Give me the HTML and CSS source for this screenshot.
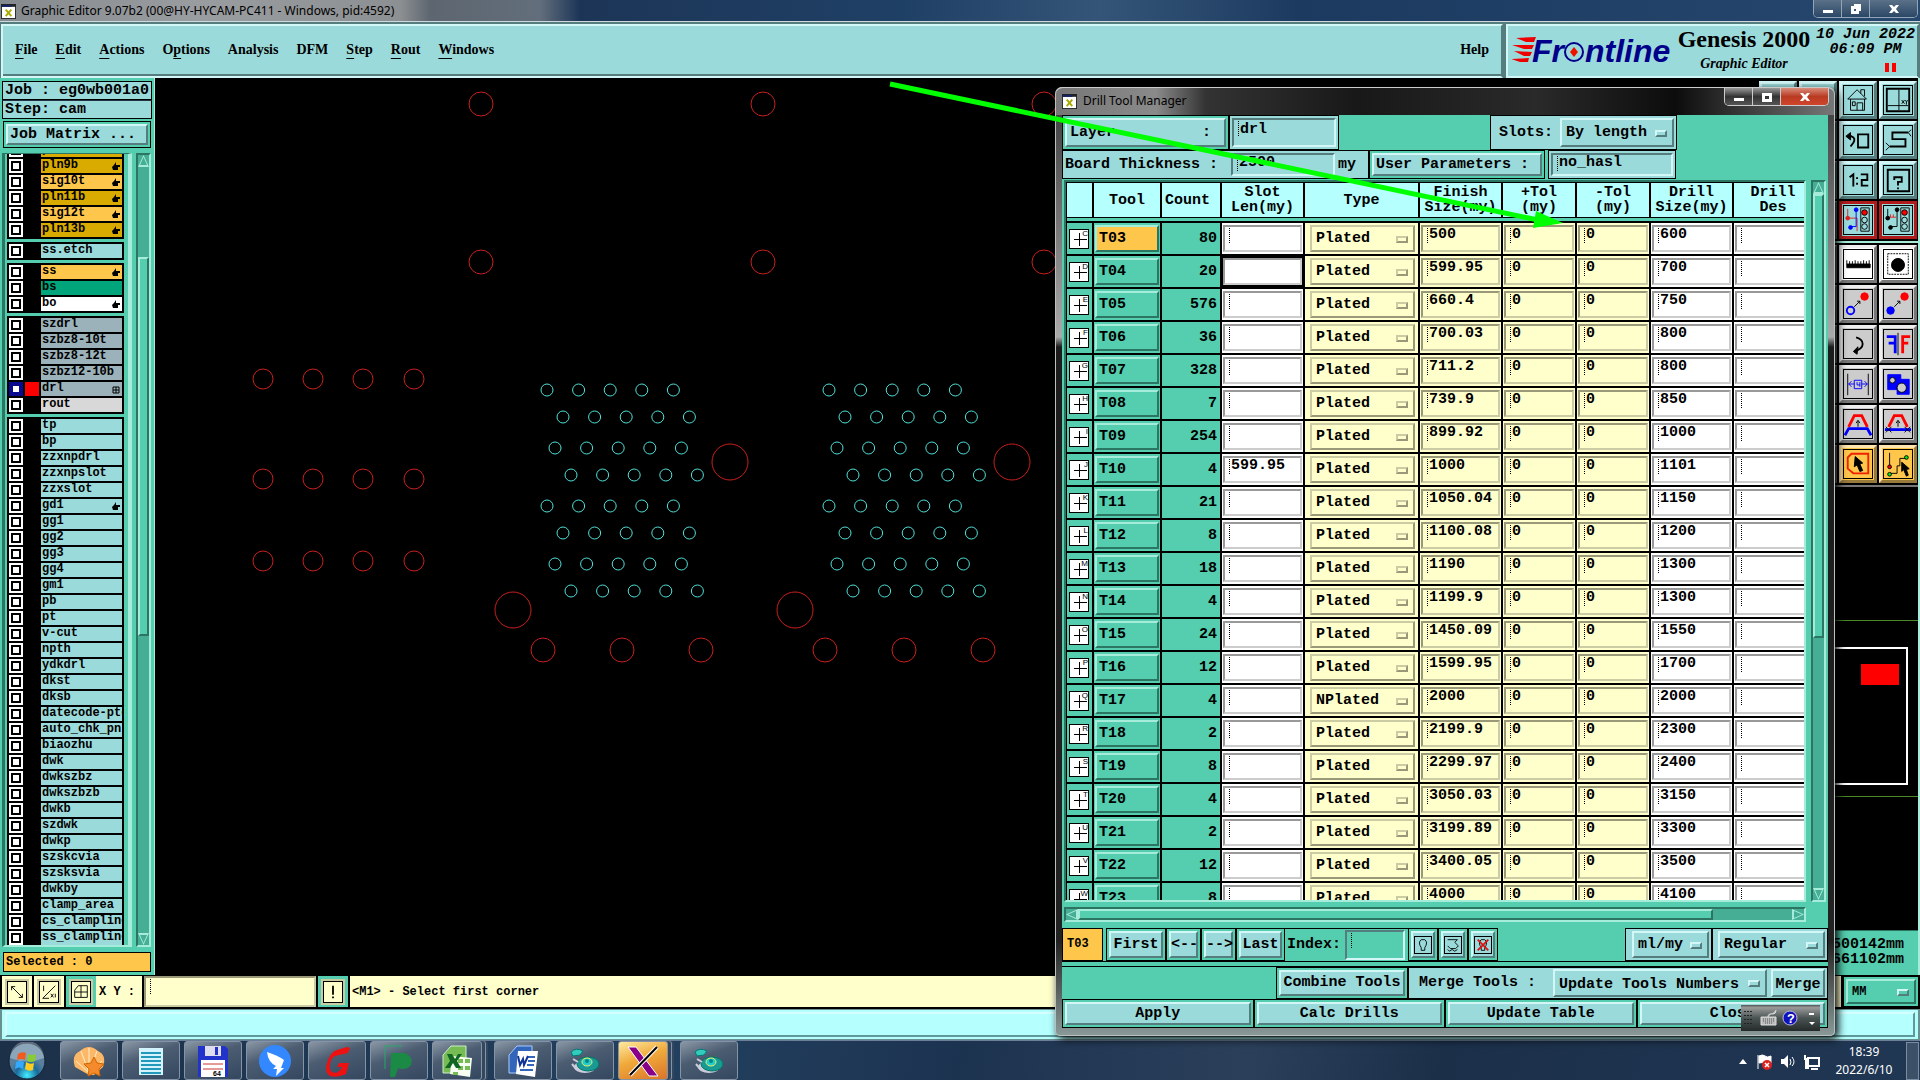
FILE: index.html
```html
<!DOCTYPE html>
<html lang="en">
<head>
<meta charset="UTF-8"/>
<meta name="viewport" content="width=device-width,initial-scale=1.0"/>
<title>Graphic Editor 9.07b2</title>
<link rel="stylesheet" href="styles.css">
</head>

<body>
<!-- ─── TITLE BAR ─────────────────────────────────────────────────────── -->
<div class="titlebar">
  <svg class="xicon" viewBox="0 0 16 16"><path d="M0 0h16v16H0z" fill="#222"/><path d="M1 3h14v12H1z" fill="#fff"/><path d="M1 1h10v2H1z" fill="#126"/><path d="M5 6l6 7M11 6l-6 7" stroke="#aa0" stroke-width="2"/></svg>
  <span class="title">Graphic Editor 9.07b2 (00@HY-HYCAM-PC411 - Windows, pid:4592)</span>
  <div class="winbtns">
    <button aria-label="Minimize"><svg viewBox="0 0 12 12"><path d="M1 7h10v3H1z"/></svg></button>
    <button aria-label="Restore"><svg viewBox="0 0 12 12"><path d="M4 1h7v7H9V3H4z"/><path d="M1 3h8v8H1zM4 6v2h2V6z" fill-rule="evenodd"/></svg></button>
    <button class="wide" aria-label="Close"><svg viewBox="0 0 12 12"><path d="M1 2h3l2 2 2-2h3L8 6l3 4H8L6 8l-2 2H1l3-4z"/></svg></button>
  </div>
</div>

<!-- ─── MENU + BRAND ──────────────────────────────────────────────────── -->
<header>
  <nav>
    <button><u>F</u>ile</button><button><u>E</u>dit</button><button><u>A</u>ctions</button><button>O<u>p</u>tions</button><button>Analysis</button><button>DFM</button><button><u>S</u>tep</button><button><u>R</u>out</button><button><u>W</u>indows</button>
    <button class="help">Help</button>
  </nav>
  <div class="brand">
    <svg class="logo" viewBox="0 0 162 42">
      <path d="M4 8l20-1-2 5h-8zM0 15l22 0-2 4h-8zM2 21l18 1-2 4h-6zM-1 29l18-1-1 4h-8z" fill="#e00"/>
      <text x="20" y="32">Fr</text><text x="73" y="32">ntline</text>
      <circle cx="62" cy="22" r="9" fill="none" stroke="#00008b" stroke-width="2"/>
      <path d="M62 17l4 5-4 5-4-5z" fill="#e10"/>
    </svg>
    <div class="product"><strong>Genesis 2000</strong><em>Graphic Editor</em></div>
    <div class="clock">10 Jun 2022<br>06:09 PM<div class="pause"><i></i><i></i></div></div>
  </div>
</header>

<!-- ─── WORKSPACE ─────────────────────────────────────────────────────── -->
<main>
  <aside class="layers">
    <div class="info">Job : eg0wb001a0</div>
    <div class="info">Step: cam</div>
    <div class="frame matrix"><button class="btn">Job Matrix ...</button></div>
    <div class="listwrap">
      <div class="listbox"><div id="list"></div></div>
      <div class="vbar"><i class="up"></i><b class="layerthumb"></b><i class="down"></i></div>
    </div>
    <div class="selected">Selected : 0</div>
  </aside>

  <svg id="canvas"></svg>

  <aside class="right">
    <div class="tools">
      <button></button><button></button>
      <button aria-label="Home"><svg viewBox="0 0 30 30"><path d="M4 14L14 4l10 10zM7 14v12h15V14M14 26v-8h6v8M9 17h3v4H9zM18 8V4h4v7"/></svg></button>
      <button aria-label="Area XY"><svg viewBox="0 0 30 30"><path d="M3 3h24v24H3z" stroke-width="2"/><path d="M16 4v22M4 21h22M19 15l3 4m0-4l-3 4M23 15l1 2 2-2m-2 2v3"/></svg></button>
      <button></button><button></button>
      <button aria-label="Previous"><svg viewBox="0 0 30 30"><path d="M15 9h11v14H15zM5 11h3q5 2 2 7l-3 4" stroke-width="2"/><path d="M2 11l5-4v8z" fill="#000"/></svg></button>
      <button aria-label="Path"><svg viewBox="0 0 30 30"><path d="M26 7H9v7h14v8H6" stroke-width="2"/><path d="M29 4l-3 3 3 4M2 18l4 4-4 4"/></svg></button>
      <button></button><button></button>
      <button aria-label="Zoom 1:2"><svg viewBox="0 0 30 30"><path d="M6 12l4-3v13M14 12v2M14 18v2M18 9h7v6h-6v6h7" stroke-width="2"/></svg></button>
      <button aria-label="Query"><svg viewBox="0 0 30 30"><path d="M4 4h23v23H4zM11 15v-3h8v5h-4v4M15 23v2" stroke-width="2"/></svg></button>
      <button></button><button></button>
      <button class="alert" aria-label="Net check"><svg viewBox="0 0 30 30"><path d="M4 3v10h10v14" stroke="#d22"/><path d="M13 4v18H7" stroke="#00f"/><circle cx="4" cy="13" r="2" fill="#d22" stroke="#d22"/><circle cx="13" cy="4" r="2" fill="#00f" stroke="#00f"/><circle cx="7" cy="23" r="2" fill="#00f" stroke="#00f"/><path d="M18 2h9v25h-9z"/><circle cx="22" cy="7" r="3" fill="red"/><circle cx="22" cy="15" r="3"/><circle cx="22" cy="22" r="3"/></svg></button>
      <button class="alert" aria-label="Short check"><svg viewBox="0 0 30 30"><path d="M4 3v10M14 4v18H8"/><path d="M5 12h8m-6-3v3m3-3v3" stroke="#d22"/><circle cx="4" cy="13" r="2" fill="#000"/><circle cx="14" cy="4" r="2" fill="#000"/><circle cx="7" cy="23" r="2" fill="#000"/><path d="M18 2h9v25h-9z"/><circle cx="22" cy="7" r="3" fill="red"/><circle cx="22" cy="15" r="3"/><circle cx="22" cy="22" r="3"/></svg></button>
    </div>
    <div class="tools gray">
      <button></button><button></button>
      <button class="white" aria-label="Measure"><svg viewBox="0 0 30 30"><path d="M3 15h25v4H3z" fill="#000"/><path d="M3 11v4m3-3v3m3-3v3m3-4v4m3-3v3m3-3v3m3-4v4m3-3v3m3-4v4"/></svg></button>
      <button class="white" aria-label="Pad"><svg viewBox="0 0 30 30"><path d="M4 4h22v22H4z" stroke-dasharray="2 1"/><circle cx="15" cy="16" r="7" fill="#000"/></svg></button>
      <button></button><button></button>
      <button aria-label="Move"><svg viewBox="0 0 30 30"><circle cx="22" cy="7" r="4" fill="red" stroke="red"/><circle cx="7" cy="22" r="4" stroke="#00f" stroke-width="2"/><path d="M11 18l6-6m-3 0h3v3"/></svg></button>
      <button aria-label="Copy"><svg viewBox="0 0 30 30"><circle cx="22" cy="7" r="4" fill="red" stroke="red"/><circle cx="7" cy="22" r="4" fill="#00f" stroke="#00f"/><path d="M11 18l6-6m-3 0h3v3"/></svg></button>
      <button></button><button></button>
      <button aria-label="Rotate"><svg viewBox="0 0 30 30"><path d="M13 8q7 2 7 7t-9 8" stroke-width="2"/><path d="M15 18l-5 5 4 3z" fill="#000"/></svg></button>
      <button aria-label="Mirror"><svg viewBox="0 0 30 30"><path d="M15 3v24"/><path d="M3 7h9v18M5 14h7" stroke="#00f" stroke-width="3"/><path d="M28 7h-8v18M20 14h6" stroke="red" stroke-width="3"/></svg></button>
      <button></button><button></button>
      <button aria-label="Stretch"><svg viewBox="0 0 30 30"><path d="M4 4v23M26 4v23"/><path d="M5 15h6m8 0h6M8 12l-3 3 3 3M22 12l3 3-3 3M11 11h8v9h-8zM14 13v3h3m0-3v5" stroke="#00f"/></svg></button>
      <button aria-label="Surface"><svg viewBox="0 0 30 30"><path d="M4 5h14v5h9v16H14v-5H4z" fill="#00f" stroke="#00f"/><circle cx="9" cy="11" r="3" fill="#ccc"/><circle cx="19" cy="19" r="5" fill="#ccc"/></svg></button>
      <button></button><button></button>
      <button aria-label="Reshape"><svg viewBox="0 0 30 30"><path d="M5 18L11 6h8l6 12" stroke="red" stroke-width="3"/><path d="M1 27l4-7h20l4 7" stroke="#00f" stroke-width="3"/><path d="M15 18v-6m-2 2l2-3 2 3"/></svg></button>
      <button aria-label="Slide"><svg viewBox="0 0 30 30"><path d="M5 18L11 6h8l6 12" stroke="red" stroke-width="3"/><path d="M1 21h28" stroke="#00f" stroke-width="3"/><path d="M15 18v-6m-2 2l2-3 2 3M2 18l6 6m0-6l-6 6M22 18l6 6m0-6l-6 6"/></svg></button>
      <button></button><button></button>
      <button class="orange" aria-label="Polygon select"><svg viewBox="0 0 30 30"><path d="M8 4h18v21H10l-6-5V8z" stroke="#e20" stroke-width="2"/><path d="M12 7l8 7-3 1 3 7-3 1-3-7-3 2z" fill="#000"/></svg></button>
      <button class="orange" aria-label="Net select"><svg viewBox="0 0 30 30"><path d="M6 3v15M6 25h8V17h3V9h6"/><circle cx="6" cy="18" r="2" fill="red"/><circle cx="6" cy="26" r="2" fill="#0e0"/><circle cx="24" cy="8" r="2" fill="#0e0"/><path d="M19 13l8 7-3 1 2 6-2 1-3-7-2 2z" fill="#000"/></svg></button>
    </div>
    <div class="overview"><div class="board"><i></i></div></div>
    <div class="coords">500142mm<br>661102mm</div>
  </aside>
</main>

<!-- ─── STATUS LINE ───────────────────────────────────────────────────── -->
<div class="status">
  <button aria-label="Diagonal"><svg viewBox="0 0 20 20"><path d="M4 4l12 12M4 8V4h4M16 12v4h-4"/></svg></button>
  <button aria-label="Angle"><svg viewBox="0 0 20 20"><path d="M3 17L17 3M3 17h7M4 3v6M12 12l3 4m0-4l-3 4m5-4v4"/></svg></button>
  <button class="on" aria-label="Grid"><svg viewBox="0 0 20 20"><path d="M7 3h10v13H3V8zM10 3v13M3 10h14"/></svg></button>
  <label for="xy">X Y :</label>
  <input id="xy" class="field" type="text">
  <button class="on" aria-label="Note"><svg viewBox="0 0 20 20"><path d="M10 3v10M10 15v2" stroke-width="2"/></svg></button>
  <span class="hint">&lt;M1&gt; - Select first corner</span>
  <div class="frame units"><span class="opt"><select aria-label="Units"><option>MM</option></select></span></div>
</div>
<div class="message"><div></div></div>

<!-- ─── TASKBAR ───────────────────────────────────────────────────────── -->
<footer>
  <button class="orb" aria-label="Start"><svg viewBox="0 0 38 38"><defs><radialGradient id="g" cy=".9"><stop offset="0" stop-color="#4ef"/><stop offset=".6" stop-color="#1a6a9c"/><stop offset="1" stop-color="#5a7f9c"/></radialGradient></defs><circle cx="19" cy="19" r="18" fill="url(#g)" stroke="#123"/><path d="M2 16a17 17 0 0 1 34 0q-17 7-34 0z" fill="#fff" opacity=".3"/><path d="M10 12q4-3 8-1l-1 7q-4-2-8 0z" fill="#f25a1e"/><path d="M20 12q4 2 8 0l-1 7q-4 2-8 0z" fill="#8c3"/><path d="M8 20q4-2 8 0l-1 7q-4-3-8 0z" fill="#3af"/><path d="M18 20q4 3 8 1l-1 7q-4 2-8-1z" fill="#fc2"/></svg></button>
  <button class="task" aria-label="Shell"><svg viewBox="0 0 36 36"><path d="M18 32L4 24Q0 12 9 8q9-8 18 0 9 4 5 16l-9 8z" fill="#fdb768"/><path d="M18 30L5 18m13 12L10 8m8 22V5m0 25l8-22m-8 22l13-12" stroke="#fff0c8" fill="none"/><path d="M23 14l3 6 7 1-5 5 1 7-6-3-6 3 1-7-5-5 7-1z" fill="#f58a2c" stroke="#c60"/></svg></button>
  <button class="task" aria-label="Notes"><svg viewBox="0 0 36 36"><path d="M6 5h24v27H6z" fill="#d5f3fc"/><path d="M8 10h20M8 14h20M8 18h20M8 22h20M8 26h20M8 30h20" stroke="#29b" stroke-width="2"/></svg></button>
  <button class="task" aria-label="Floppy"><svg viewBox="0 0 36 36"><path d="M3 3h27l3 3v28H3z" fill="#23c"/><path d="M10 3h16v10H10z" fill="#dde"/><path d="M20 4h3v8h-3z" fill="#23c"/><path d="M6 17h24v17H6z" fill="#fff"/><path d="M8 21h20M8 26h20" stroke="#c33"/><text x="18" y="33" font-size="7">64</text></svg></button>
  <button class="task" aria-label="Bird"><svg viewBox="0 0 36 36"><circle cx="18" cy="18" r="16" fill="#38f"/><path d="M10 9q10 3 17 8l-3 8h3l-8 8 1-7h-4l3-3q-8-4-9-14z" fill="#fff"/></svg></button>
  <button class="task" aria-label="G"><svg viewBox="0 0 36 36"><path d="M28 4l3 1-2 5-13 3q-4 2-5 8t2 8q6 3 10-5h-5l2-4h10l-3 11q-9 4-16 2-6-4-3-13 3-11 10-13z" fill="#e11"/></svg></button>
  <button class="task" aria-label="P"><svg viewBox="0 0 36 36"><path d="M4 26V3h17" fill="none" stroke="#2a6"/><path d="M10 10h14q9 4 6 12-5 6-13 3l-3 9H9z" fill="#1a8a45"/></svg></button>
  <button class="task stack" aria-label="Spreadsheet"><svg viewBox="0 0 36 36"><path d="M4 30V12l8-9h15v27z" fill="#7b5" stroke="#cec"/><path d="M13 13l20 2-2 19-20-3z" fill="#f6fff2"/><path d="M19 16h5v4h-5zm7 0h5v4h-5zm-7 7h5v4h-5zm7 0h5v4h-5zm-12 6h5v3h-5z" fill="#7b5"/><path d="M8 11h5l3 5 3-5h4l-5 7 4 7h-5l-3-5-3 5H6l5-7z" fill="#162"/></svg></button>
  <button class="task" aria-label="Document"><svg viewBox="0 0 36 36"><path d="M4 30V12l8-9h15v27z" fill="#36b" stroke="#acf"/><path d="M13 8h20l-3 26-19-3z" fill="#fff"/><path d="M23 14h7M23 18h7M22 22h7M15 27h13" stroke="#36b" stroke-width="2"/><path d="M13 13l2 9 3-6 1 6 4-9" fill="none" stroke="#139" stroke-width="2"/></svg></button>
  <button class="task" aria-label="Disc"><svg viewBox="0 0 36 36"><ellipse cx="18" cy="24" rx="11" ry="6" fill="#ccd"/><ellipse cx="21" cy="21" rx="11" ry="7" fill="#1a9a94" stroke="#076"/><ellipse cx="20" cy="19" rx="5" ry="4" fill="#2cc" stroke="#ee6"/><circle cx="20" cy="18" r="2" fill="#088"/><path d="M4 9q5-5 12-1l-3 4-7 1z" fill="#3cb" stroke="#077"/><path d="M6 16l5 3M5 21l5 6" stroke="#ccd" stroke-width="2"/></svg></button>
  <button class="task active stack" aria-label="X server"><svg viewBox="0 0 36 36"><path d="M3 4h8l22 29h-9z" fill="#808" stroke="#fff"/><path d="M32 4L5 32" stroke="#fff" stroke-width="4"/><path d="M32 4L5 32" stroke="#000" stroke-width="2"/></svg></button>
  <button class="task" aria-label="Disc 2"><svg viewBox="0 0 36 36"><ellipse cx="18" cy="24" rx="11" ry="6" fill="#ccd"/><ellipse cx="21" cy="21" rx="11" ry="7" fill="#1a9a94" stroke="#076"/><ellipse cx="20" cy="19" rx="5" ry="4" fill="#2cc" stroke="#ee6"/><circle cx="20" cy="18" r="2" fill="#088"/><path d="M4 9q5-5 12-1l-3 4-7 1z" fill="#3cb" stroke="#077"/><path d="M6 16l5 3M5 21l5 6" stroke="#ccd" stroke-width="2"/></svg></button>
  <div class="tray">
    <svg viewBox="0 0 84 18"><path d="M1 12l4-5 4 5z" fill="#fff"/><path d="M20 3v14M21 4q4-2 6 0t6 0v7q-4 1-6 0t-6 0z" fill="#fff" stroke="#fff"/><circle cx="29" cy="13" r="5" fill="#d22"/><path d="M27 11l4 4m0-4l-4 4" stroke="#fff" stroke-width="1.5"/><path d="M43 7h3l4-4v13l-4-4h-3z" fill="#fff"/><path d="M52 7q2 3 0 6M54 5q4 5 0 9" fill="none" stroke="#fff"/><path d="M70 6h11v8H70zM73 17h7M67 3v4h4M68 8v8h3" fill="none" stroke="#fff" stroke-width="2"/></svg>
    <div class="time">18:39<br>2022/6/10</div>
    <button class="peek" aria-label="Show desktop"></button>
  </div>
</footer>

<!-- ─── DRILL TOOL MANAGER ────────────────────────────────────────────── -->
<section class="dialog">
  <div class="dtitle">
    <svg class="xicon" viewBox="0 0 16 16"><path d="M0 0h16v16H0z" fill="#222"/><path d="M1 3h14v12H1z" fill="#fff"/><path d="M1 1h10v2H1z" fill="#126"/><path d="M5 6l6 7M11 6l-6 7" stroke="#aa0" stroke-width="2"/></svg>
    <span>Drill Tool Manager</span>
    <div class="winbtns">
      <button aria-label="Minimize"><svg viewBox="0 0 12 12"><path d="M1 7h10v3H1z"/></svg></button>
      <button aria-label="Maximize"><svg viewBox="0 0 12 12"><path d="M1 2h10v9H1zM4 5v3h4V5z" fill-rule="evenodd"/></svg></button>
      <button class="wide red" aria-label="Close"><svg viewBox="0 0 12 12"><path d="M1 2h3l2 2 2-2h3L8 6l3 4H8L6 8l-2 2H1l3-4z"/></svg></button>
    </div>
  </div>
  <div class="client">
    <div class="row row1">
      <div class="frame w-layer"><button class="btn split"><span>Layer</span><span>:</span></button></div>
      <div class="frame aqua w-drl"><input class="field" type="text" value="drl" aria-label="Layer"></div>
      <div class="frame aqua slots"><label for="slots">Slots:</label><span class="opt"><select id="slots"><option>By length</option></select></span></div>
    </div>
    <div class="row row2">
      <div class="frame aqua board-t"><label for="thick">Board Thickness :</label><input id="thick" class="field" type="text" value="2500"><span>my</span></div>
      <div class="frame w-user"><button class="btn">User Parameters :</button></div>
      <div class="frame aqua w-hasl"><input class="field" type="text" value="no_hasl" aria-label="User parameters"></div>
    </div>
    <div class="scroller">
      <div class="tablebox">
        <table>
          <colgroup><col class="c1"><col class="c2"><col class="c3"><col class="c4"><col class="c5"><col class="c4"><col class="c6"><col class="c6"><col class="c4"><col class="c7"></colgroup>
          <thead><tr><th></th><th>Tool</th><th class="cnt">Count</th><th>Slot<br>Len(my)</th><th>Type</th><th>Finish<br>Size(my)</th><th>+Tol<br>(my)</th><th>-Tol<br>(my)</th><th>Drill<br>Size(my)</th><th>Drill<br>Des</th></tr></thead>
          <tbody id="tools"></tbody>
        </table>
      </div>
      <div class="vbar"><i class="up"></i><b class="tablethumb"></b><i class="down"></i></div>
      <div class="hbar"><i class="left"></i><b></b><i class="rightarrow"></i></div>
    </div>
    <div class="row row3">
      <div class="current">T03</div>
      <div class="frame w-first"><button class="btn">First</button></div>
      <div class="frame w-prev"><button class="btn">&lt;--</button></div>
      <div class="frame w-prev"><button class="btn">--&gt;</button></div>
      <div class="frame w-last"><button class="btn">Last</button></div>
      <div class="index"><label for="idx">Index:</label><input id="idx" class="field" type="text"></div>
      <div class="frame w-ico"><button class="btn" aria-label="Highlight"><svg viewBox="0 0 18 18"><path d="M7 12Q3 6 7 3h4q4 3 0 9v3H7z"/></svg></button></div>
      <div class="frame w-ico"><button class="btn" aria-label="Feature"><svg viewBox="0 0 18 18"><path d="M3 3h11l-3 3 4 4-3 3H6l-3-3M3 14l2 2 3-2 3 2 3-2"/></svg></button></div>
      <div class="frame w-ico"><button class="btn" aria-label="Clear"><svg viewBox="0 0 18 18"><path d="M7 12Q3 6 7 3h4q4 3 0 9v3H7z"/><path d="M3 3l12 12M15 3L3 15" stroke="#d11" stroke-width="2"/></svg></button></div>
      <div class="frame aqua w-unit"><span class="opt"><select aria-label="Length unit"><option>ml/my</option></select></span></div>
      <div class="frame aqua w-reg"><span class="opt"><select aria-label="Mode"><option>Regular</option></select></span></div>
    </div>
    <div class="row row4">
      <div class="frame w-comb"><button class="btn">Combine Tools</button></div>
      <div class="frame aqua merge"><label for="merge">Merge Tools :</label><span class="opt"><select id="merge"><option>Update Tools Numbers</option></select></span><span class="ring"><button class="btn">Merge</button></span></div>
    </div>
    <div class="row row5">
      <div class="frame"><button class="btn">Apply</button></div>
      <div class="frame"><button class="btn">Calc Drills</button></div>
      <div class="frame"><button class="btn">Update Table</button></div>
      <div class="frame"><button class="btn">Close</button></div>
    </div>
  </div>
</section>

<div class="langbar">
  <svg viewBox="0 0 79 26"><path d="M4 6v16M7 6v16M10 6v16" stroke="#222" stroke-dasharray="1 3" stroke-width="2"/><path d="M20 12h15v8H20zM27 12q0-4 5-3 3 0 3-4" fill="#bbb" stroke="#ddd"/><path d="M22 14h11M22 16h11M24 18h7" stroke="#555" stroke-dasharray="1 1"/><circle cx="49" cy="13" r="7" fill="#11b" stroke="#bbd"/><text x="46" y="18" font-size="13" fill="#fff">?</text><path d="M68 9h5" stroke="#fff" stroke-width="2"/><path d="M68 17h6l-3 3z" fill="#fff"/></svg>
</div>

<svg class="arrow" viewBox="0 0 680 150"><path d="M2 3L650 139" stroke="#0f0" stroke-width="5"/><path d="M648 130l27 12-30 5z" fill="#0f0"/></svg>

<script src="app.js"></script>
</body>
</html>
```
FILE: styles.css
```css
:root{
  --teal:#54ceae;--teal-l:#a6ecda;--teal-d:#2c7563;--trough:#45ae94;
  --aqua:#9bdada;--aqua-l:#d3f6f6;--aqua-d:#557d7d;
  --ice:#b5ffff;--cream:#ffffcc;--orange:#ffc64c;
  --mono:"Liberation Mono",monospace;--serif:"Liberation Serif",serif;--ui:"Noto Sans","Open Sans",sans-serif;
}
*,*::before,*::after{box-sizing:border-box;margin:0;padding:0}
html,body{height:100%}
body{display:flex;flex-direction:column;background:#000;color:#000;font:bold 15px/18px var(--mono);overflow:hidden;position:relative}
button,input,select{font:inherit;color:inherit;border:0;border-radius:0;background:none;appearance:none;outline:0}
select{padding:0}
svg{display:block}

/* ─── TITLE BAR ─────────────────────────────────────────────────────────── */
.titlebar{height:22px;display:flex;align-items:flex-start;padding-left:1px;border-bottom:1px solid #cfd8de;position:relative;
  background:linear-gradient(90deg,#858a8e 0,#9a9da0 200px,#8d9092 400px,#5d6670 430px,#626e7b 540px,#1c3557 580px,#1f4065 900px,#345577 1100px,#1c3a60 1300px,#26476e 100%)}
.xicon{width:15px;height:15px;margin:4px 5px 0 0}
.title{font:12px/22px var(--ui)}
.winbtns{margin-left:auto;margin-right:2px;display:flex;height:18px;border:1px solid #93a6b8;border-top:0;border-radius:0 0 5px 5px;overflow:hidden}
.winbtns button{width:28px;display:grid;place-items:center;background:linear-gradient(#5b7188,#2b4766);border-right:1px solid #93a6b8}
.winbtns .wide{width:47px;border-right:0}
.winbtns .red{background:linear-gradient(#d98c7c,#b93b22 50%,#c8402a)}
.winbtns svg{width:12px;height:12px;fill:#fff}

/* ─── MENU + BRAND ──────────────────────────────────────────────────────── */
header{height:56px;display:flex;gap:3px;padding:2px 1px 0;background:var(--aqua-d)}
nav,.brand{background:var(--aqua);border:2px solid var(--aqua-l);border-right-color:var(--aqua-d)}
nav{flex:1;display:flex;align-items:center;gap:18px;padding:0 12px 2px;box-shadow:inset 0 -2px var(--aqua-d);font:bold 14px/20px var(--serif)}
nav u{text-underline-offset:4px}
.help{margin-left:auto}
.brand{width:413px;display:flex;padding-left:4px}
.logo{width:162px;height:42px;margin-top:4px}
.logo text{font:italic bold 32px "Liberation Sans",sans-serif;fill:#00008b}
.product{width:140px;text-align:center;font-family:var(--serif)}
.product strong{display:block;font-size:24px;line-height:26px}
.product em{display:block;font-size:14px;line-height:24px}
.clock{flex:1;padding-top:1px;text-align:center;font-style:italic;line-height:15px;white-space:nowrap}
.pause{display:flex;gap:3px;justify-content:center;margin:6px 0 0 50px}
.pause i{width:4px;height:9px;background:red}

/* ─── LAYER PANEL ───────────────────────────────────────────────────────── */
main{flex:1;min-height:0;display:flex}
.layers{width:155px;display:flex;flex-direction:column;padding:3px 2px;background:var(--teal);border-right:1px solid var(--teal-l)}
.info{height:19px;padding-left:2px;background:var(--aqua);border:1px solid #000;white-space:nowrap}
.info+.info{border-top-color:#234}
.frame{border:1px solid #000;padding:2px;display:flex;background:var(--teal)}
.frame.aqua{background:var(--aqua)}
.btn{flex:1;min-width:0;background:var(--aqua);border:2px solid var(--aqua-l);border-right-color:var(--aqua-d);border-bottom-color:var(--aqua-d);white-space:nowrap}
.matrix{margin:2px 1px 5px;height:27px}
.matrix .btn{text-align:left;padding-left:2px}
.listwrap{flex:1;min-height:0;display:flex;gap:4px;padding-right:1px}
.listbox{flex:1;min-width:0;overflow:hidden;border:solid;border-width:1px 4px 2px 3px;border-color:var(--teal-d) var(--teal-l) var(--teal-l) var(--teal-d)}
#list{margin:-13px 4px 0 2px}
.group{background:#000;padding:2px;display:grid;grid-template-columns:minmax(0,1fr);gap:2px;margin-bottom:3px}
.layer{display:flex;gap:2px;height:14px}
.layer input{width:14px;height:14px;background:#fff;border:2px solid #fff;box-shadow:inset 0 0 0 2px #000}
.layer input:checked{border-color:#0a0a90;box-shadow:inset 0 0 0 2px #0a0a90}
.layer i{width:14px}
.layer label{flex:1;min-width:0;overflow:hidden;white-space:nowrap;background:var(--aqua);font-size:12px;line-height:13px;padding-left:1px;position:relative}
.layer svg{position:absolute;right:2px;top:3px;width:8px;height:9px}
.layer .red{background:red}
.layer .gold{background:#d9aa00}
.layer .amber{background:var(--orange)}
.layer .green{background:#00a57b}
.layer .white{background:#fff}
.layer .slate{background:#9bb2bb}
.layer .pale{background:#d8d8d8}
.selected{height:20px;margin:5px 1px 0;background:var(--orange);border:1px solid #000;font-size:12px;line-height:18px;padding-left:2px}

/* ─── SCROLL BARS ───────────────────────────────────────────────────────── */
.vbar,.hbar{background:var(--trough);border:2px solid var(--teal-d);border-right-color:var(--teal-l);border-bottom-color:var(--teal-l);display:flex}
.vbar{width:15px;flex-direction:column}
.vbar b,.hbar b{background:var(--teal);border:2px solid var(--teal-l);border-right-color:var(--teal-d);border-bottom-color:var(--teal-d)}
.vbar i,.hbar i{background:var(--teal-l);flex:none;position:relative}
.vbar i{height:12px}
.hbar i{width:12px}
.vbar i::after,.hbar i::after{content:"";position:absolute;inset:2px;background:var(--trough);clip-path:inherit}
.up{clip-path:polygon(50% 0,100% 100%,0 100%)}
.down{clip-path:polygon(0 0,100% 0,50% 100%);margin-top:auto}
.left{clip-path:polygon(0 50%,100% 0,100% 100%)}
.rightarrow{clip-path:polygon(0 0,100% 50%,0 100%);margin-left:auto}
.layerthumb{height:48%;margin-top:90px}
.tablethumb{height:444px}
.hbar b{width:86%}

/* ─── CANVAS + RIGHT TOOLS ──────────────────────────────────────────────── */
#canvas{flex:1;min-width:0;height:100%}
#canvas circle{fill:none;stroke:#c8201c}
#canvas .via{stroke:#4fe0d8}
.right{width:163px;display:flex;flex-direction:column;border-right:2px solid var(--teal-l)}
.tools{display:grid;grid-template-columns:repeat(4,38px);gap:2px;padding:3px 1px 2px 2px;background:#000;border-bottom:2px solid var(--teal-l)}
.tools button{height:38px;display:grid;place-items:center;background:var(--aqua);border:3px solid var(--aqua-l);border-right-color:var(--aqua-d);border-bottom-color:var(--aqua-d)}
.tools .alert{border-color:#b01c1c}
.gray{padding-top:2px;border-color:#777}
.gray button{background:#ccc;border-color:#eee #777 #777 #eee}
.gray .white{background:#fff}
.gray .orange{background:var(--orange);border-color:#ffe6ae #987a3a #987a3a #ffe6ae}
.tools svg{width:30px;height:30px;border:1px solid #000;fill:none;stroke:#000}
.overview{flex:1;display:flex;align-items:center;padding-top:14px;position:relative}
.overview::before,.overview::after{content:"";position:absolute;left:0;right:0;height:1px;background:#4a8a28}
.overview::before{top:30%}
.overview::after{bottom:30%}
.board{flex:1;height:138px;margin-right:10px;border:2px solid #fff;border-left:0;padding:15px 7px}
.board i{display:block;width:38px;height:21px;margin-left:auto;background:red}
.coords{height:45px;padding:6px 14px 0 0;text-align:right;line-height:15px;background:var(--teal);border-top:1px solid var(--teal-d)}

/* ─── FIELDS ────────────────────────────────────────────────────────────── */
.field{min-width:0;height:27px;padding:0 0 8px 6px;border:2px solid var(--aqua-d);border-right-color:var(--aqua-l);border-bottom-color:var(--aqua-l);
  background:repeating-linear-gradient(#000 0 1px,transparent 1px 2px) 4px 1px/1px 16px no-repeat}
.opt{position:relative;display:flex;background:var(--aqua);border:2px solid var(--aqua-l);border-right-color:var(--aqua-d);border-bottom-color:var(--aqua-d)}
.opt select{flex:1;width:100%;padding-left:4px}
.opt::after{content:"";position:absolute;right:5px;top:calc(50% - 3px);width:12px;height:7px;border:2px solid var(--aqua-l);border-right-color:var(--aqua-d);border-bottom-color:var(--aqua-d);pointer-events:none}

/* ─── STATUS LINE ───────────────────────────────────────────────────────── */
.status{height:34px;display:flex;gap:2px;padding:1px 1px 2px 2px;font-size:12px}
.status>button{width:30px;background:var(--cream);display:grid;place-items:center}
.status>button.on{border:3px solid var(--teal)}
.status svg{width:20px;height:22px;border:1px solid #000;outline:2px solid #cccca4;fill:none;stroke:#000}
.status label{width:46px;margin-left:-2px;padding-left:3px;background:var(--cream);line-height:32px}
.status .field{width:172px;height:31px;background-color:var(--cream);border-color:#99997a #cccca4 #cccca4 #99997a}
.hint{flex:1;background:var(--cream);line-height:32px;padding-left:2px}
.units{width:76px;font-size:12px}
.units .opt{flex:1;background:var(--teal);border-color:var(--teal-l) var(--teal-d) var(--teal-d) var(--teal-l)}
.message{height:31px;background:var(--ice);border:solid #68908f;border-width:1px 2px;padding:2px 3px}
.message div{height:100%;border:2px solid #d5ffff;border-bottom-color:#5f9999;border-right-color:#5f9999}

/* ─── TASKBAR ───────────────────────────────────────────────────────────── */
footer{height:40px;display:flex;gap:4px;background:linear-gradient(100deg,#1c3048,#22405f 35%,#1c3350 50%,#2b3f5a 65%,#1b2f49 75%,#203754);border-top:1px solid #6b8096}
.orb{width:38px;margin:0 10px 0 8px}
.task{width:58px;display:grid;place-items:center;border:1px solid #8494a6;border-radius:3px;background:linear-gradient(160deg,#8a97a5 0,#4c5d72 40%,#33475f)}
.task svg{width:36px;height:36px}
.task text{font:bold 7px "Liberation Sans",sans-serif}
.stack{width:50px;margin-right:8px;box-shadow:3px 0 #33475f,4px 0 #8494a6,6px 0 #33475f}
.active{background:linear-gradient(160deg,#ffe9a0,#f0a93a 45%,#d9742a)}
.tray{margin-left:auto;display:flex;align-items:center;color:#fff}
.tray svg{width:84px;height:18px}
.time{width:84px;font:12px/18px var(--ui);text-align:center}
.peek{width:13px;height:38px;border:1px solid #7b8ca0;background:#3c5068;margin-right:1px}

/* ─── DIALOG ────────────────────────────────────────────────────────────── */
.dialog{position:absolute;right:85px;top:87px;bottom:44px;width:780px;display:flex;flex-direction:column;padding:0 7px 8px;border-radius:7px 7px 5px 5px;
  background:linear-gradient(#777 0,#444 28px,#aaa 250px,#1c1c1c 260px,#222 90%,#8a9a98);box-shadow:inset 0 0 0 1px #b8c0c0,3px 3px 8px #000}
.dtitle{height:28px;margin:0 -6px;padding:0 5px 0 6px;display:flex;font:12px/26px var(--ui);border-top:1px solid #ccc;border-radius:7px 7px 0 0;
  background:linear-gradient(90deg,#777 0,#8a8a8a 100px,#333 150px,#181818 300px,#2a2a2a 480px,#0c0c0c 620px,#777)}
.dtitle .xicon{margin:6px 6px 0 0}
.dtitle .winbtns{margin-right:0;border-color:#ccc}
.dtitle .winbtns button{background:linear-gradient(#999,#333 50%,#555);border-color:#ccc}
.dtitle .winbtns .red{background:linear-gradient(#d98c7c,#b93b22 50%,#d0452c)}
.client{flex:1;min-height:0;display:flex;flex-direction:column;background:var(--teal)}
.row{display:flex}
.row1{height:35px}
.row2{height:29px}
.w-layer{width:167px}
.split{display:flex;justify-content:space-between;align-items:center;padding:0 13px 0 3px}
.w-drl{width:110px}
.row>.frame>.field{flex:1;height:auto;padding-bottom:6px}
.row2>.frame>.field{padding-bottom:3px;line-height:16px}
.slots{margin:0 151px 0 auto;width:187px;align-items:stretch}
.slots label{width:67px;padding-left:6px;line-height:29px}
.slots .opt{flex:1}
.board-t{width:307px;line-height:24px;padding-right:12px}
.board-t label{width:166px}
.board-t .field{margin-right:3px}
.w-user{width:176px;margin-right:3px}
.w-user .btn{text-align:left;padding-left:2px}
.w-hasl{width:128px}
.scroller{flex:1;min-height:0;display:grid;grid-template:minmax(0,1fr) 15px/minmax(0,1fr) 15px;gap:5px;padding:1px 2px 6px}
.tablebox{overflow:hidden;border:2px solid var(--teal-d);border-right-color:var(--teal-l);border-bottom-color:var(--teal-l)}
table{table-layout:fixed;width:748px;border-spacing:0;border-left:1px solid #000}
.c1{width:27px}.c2{width:68px}.c3{width:60px}.c4{width:83px}.c5{width:115px}.c6{width:74px}.c7{width:80px}
th{height:36px;background:var(--ice);border:solid #000;border-width:1px 2px 1px 0;line-height:15px}
th.cnt{text-align:left;padding-left:3px}
tbody::before{content:"";display:table-row;height:3px}
td{height:33px;border:solid #000;border-width:0 2px 2px 0;padding:0 1px}
tr:first-child td{border-top-width:2px;height:35px}
td .field,td .btn,td .opt{display:flex;width:100%;height:27px}
td .btn{background:var(--teal);border-color:var(--teal-l) var(--teal-d) var(--teal-d) var(--teal-l);padding-left:2px;align-items:center}
td .btn.on{background:var(--orange)}
td.num{text-align:right;padding-right:3px}
.cream{background:var(--cream)}
.paper{background:#fff}
.cream .field{border-color:#99997a #cccca4 #cccca4 #99997a}
.paper .field{border-color:#999 #ccc #ccc #999}
.paper .field.focus{background:#fff;outline:2px solid #000}
.cream .opt{background:var(--cream);border-color:#cccca4 #99997a #99997a #cccca4}
.cream .opt::after{border-color:#cccca4 #99997a #99997a #cccca4}
td.cream:nth-child(5){padding:0 3px 0 5px}
.sym{position:relative;width:20px;height:20px;margin-left:1px;background:#fff;border:1px solid #000}
.sym::before,.sym::after{content:"";position:absolute;background:#000}
.sym::before{left:4px;top:9px;width:13px;height:1px}
.sym::after{left:9px;top:3px;width:1px;height:13px}
.sym b{position:absolute;right:0;top:0;font:8px/8px "Liberation Sans",sans-serif}

.row3{height:34px;margin-bottom:4px;border-bottom:1px solid #000}
.row3 .opt{flex:1}
.current{width:41px;margin-right:3px;background:var(--orange);border:1px solid #000;font-size:12px;line-height:30px;padding-left:4px}
.w-first{width:60px}.w-prev{width:35px}.w-last{width:49px}.w-ico{width:30px}
.index{width:123px;display:flex;border-top:1px solid #000;padding:1px 3px 1px 2px;line-height:30px}
.index .field{width:60px;height:auto;margin-left:auto}
.w-ico svg{width:18px;height:18px;margin:auto;border:1px solid #000;fill:none;stroke:#000}
.w-unit{width:87px;margin-left:auto;padding-left:6px}
.w-reg{width:116px;padding-left:5px}
.row4{height:33px;border-top:1px solid #000}
.w-comb{width:132px;margin-left:214px}
.merge{flex:1;line-height:27px;padding:1px 2px}
.merge label{width:142px;padding-left:8px}
.merge .opt{flex:1}
.ring{display:flex;width:58px;padding:0 0 0 4px}
.row5{height:29px}
.row5 .frame{flex:1}

.langbar{position:absolute;left:1741px;bottom:49px;width:79px;height:26px;background:linear-gradient(#555,#999 10%,#4a5553 50%,#252a2a)}
.arrow{position:absolute;left:888px;top:81px;width:680px;height:150px;pointer-events:none}
@media(max-width:1800px){.langbar{left:auto;right:100px}}
```
FILE: app.js
```js
/* layer list: [name, colour, marker] */
const hand='<svg viewBox="0 0 8 9"><path d="M4 0v3h4v2H6v3H1L0 5l2-2z"/></svg>';
const grid='<svg viewBox="0 0 8 9"><path d="M1 2h6v6H1zM4 2v6M1 5h6" fill="none" stroke="#000"/></svg>';
const groups=[
  [['pln7b','gold',hand],['pln9b','gold',hand],['sig10t','amber',hand],['pln11b','gold',hand],['sig12t','amber',hand],['pln13b','gold',hand]],
  [['ss.etch']],
  [['ss','amber',hand],['bs','green'],['bo','white',hand]],
  [['szdrl','slate'],['szbz8-10t','slate'],['szbz8-12t','slate'],['szbz12-10b','slate'],['drl','slate',grid],['rout','pale']],
  ['tp','bp','zzxnpdrl','zzxnpslot','zzxslot','gd1','gg1','gg2','gg3','gg4','gm1','pb','pt','v-cut','npth','ydkdrl','dkst','dksb','datecode-pte','auto_chk_pnl','biaozhu','dwk','dwkszbz','dwkszbzb','dwkb','szdwk','dwkp','szskcvia','szsksvia','dwkby','clamp_area','cs_clampline','ss_clampline'].map(n=>n==='gd1'?[n,'',hand]:[n])
];
document.getElementById('list').innerHTML=groups.map(g=>'<div class="group">'+g.map(([n,c='',m=''])=>{
  const on=n==='drl';
  return `<div class="layer"><input type="checkbox" id="l-${n}"${on?' checked':''}><i${on?' class="red"':''}></i><label for="l-${n}" class="${c}">${n}${m}</label></div>`;
}).join('')+'</div>').join('');

/* drill table: count, finish size, drill size */
const drills=[[80,'500',600],[20,'599.95',700],[576,'660.4',750],[36,'700.03',800],[328,'711.2',800],[7,'739.9',850],[254,'899.92',1000],[4,'1000',1101],[21,'1050.04',1150],[8,'1100.08',1200],[18,'1190',1300],[4,'1199.9',1300],[24,'1450.09',1550],[12,'1599.95',1700],[4,'2000',2000],[2,'2199.9',2300],[8,'2299.97',2400],[4,'3050.03',3150],[2,'3199.89',3300],[12,'3400.05',3500],[8,'4000',4100]];
const field=(label,v='',cls='')=>`<input class="field ${cls}" type="text" value="${v}" aria-label="${label}">`;
document.getElementById('tools').innerHTML=drills.map(([n,fin,size],i)=>{
  const t='T'+String(i+3).padStart(2,'0');
  return `<tr><td><div class="sym"><b>${String.fromCharCode(67+i)}</b></div></td>
    <td><button class="btn${i?'':' on'}">${t}</button></td><td class="num">${n}</td>
    <td class="paper">${field(t+' slot length',i===7?'599.95':'',i===1?'focus':'')}</td>
    <td class="cream"><span class="opt"><select aria-label="${t} type"><option>${i===14?'NPlated':'Plated'}</option></select></span></td>
    <td class="cream">${field(t+' finish size',fin)}</td>
    <td class="cream">${field(t+' plus tolerance',0)}</td><td class="cream">${field(t+' minus tolerance',0)}</td>
    <td class="paper">${field(t+' drill size',size)}</td><td class="paper">${field(t+' designator')}</td></tr>`;
}).join('');

/* drill holes, in panel pixels */
const holes=[];
const add=(x,y,r,c='')=>holes.push(`<circle cx="${x}" cy="${y}" r="${r}" class="${c}"/>`);
[326,608,889].forEach(x=>[26,184].forEach(y=>add(x,y,12)));
[301,401,483].forEach(y=>[108,158,208,259].forEach(x=>add(x,y,10)));
[0,282].forEach(dx=>{
  [[392,312],[408,339],[400,370],[416,397]].forEach(([x,y])=>{
    for(let k=0;k<5;k++)[0,116].forEach(dy=>add(dx+x+k*31.6,y+dy,6,'via'));
  });
  add(dx+575,384,18);
  add(dx+358,532,18);
  [388,467,546].forEach(x=>add(dx+x,572,12));
});
document.getElementById('canvas').innerHTML=holes.join('');
```
